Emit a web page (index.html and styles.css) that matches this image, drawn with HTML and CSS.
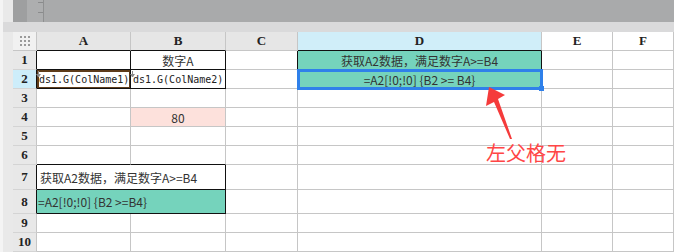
FILE: index.html
```html
<!DOCTYPE html>
<html lang="zh">

<head>
  <meta charset="UTF-8" />
  <meta name="viewport" content="width=device-width, initial-scale=1.0" />
  <title>报表设计</title>
  <link rel="stylesheet" href="styles.css">
</head>

<body>
  <div class="app">
    <div class="edge"></div>
    <div class="main">
      <div class="toolbar">
        <div class="tb-grip"></div>
        <div class="tb-ruler"><i></i><i></i></div>
      </div>
      <div class="band"></div>

      <div class="sheet">
        <!-- header -->
        <div class="corner"><span class="dots"><i></i><i></i><i></i><i></i><i></i><i></i><i></i><i></i><i></i></span></div>
        <div class="ch bk-b">A</div>
        <div class="ch bk-b">B</div>
        <div class="ch">C</div>
        <div class="ch sel bk-b">D</div>
        <div class="ch plain">E</div>
        <div class="ch plain">F</div>

        <!-- 1 -->
        <div class="rh bk-r">1</div>
        <div class="c bk-r bk-b"></div>
        <div class="c bk-r bk-b center">数字A</div>
        <div class="c bk-r"></div>
        <div class="c green bk-r bk-b center">获取A2数据，满足数字A&gt;=B4</div>
        <div class="c"></div>
        <div class="c"></div>

        <!-- 2 -->
        <div class="rh sel bk-r">2</div>
        <div class="c bk-r bk-b src mono"><span class="mark"></span>ds1.G(ColName1)</div>
        <div class="c bk-r bk-b mono"><span class="mark"></span>ds1.G(ColName2)</div>
        <div class="c bk-r"></div>
        <div class="c green center active">=A2[!0;!0] {B2 &gt;= B4}</div>
        <div class="c"></div>
        <div class="c"></div>

        <!-- 3 -->
        <div class="rh">3</div>
        <div class="c"></div>
        <div class="c"></div>
        <div class="c"></div>
        <div class="c"></div>
        <div class="c"></div>
        <div class="c"></div>

        <!-- 4 -->
        <div class="rh">4</div>
        <div class="c"></div>
        <div class="c pink center">80</div>
        <div class="c"></div>
        <div class="c"></div>
        <div class="c"></div>
        <div class="c"></div>

        <!-- 5 -->
        <div class="rh">5</div>
        <div class="c"></div>
        <div class="c"></div>
        <div class="c"></div>
        <div class="c"></div>
        <div class="c"></div>
        <div class="c"></div>

        <!-- 6 -->
        <div class="rh">6</div>
        <div class="c bk-b"></div>
        <div class="c bk-b"></div>
        <div class="c"></div>
        <div class="c"></div>
        <div class="c"></div>
        <div class="c"></div>

        <!-- 7 -->
        <div class="rh bk-r">7</div>
        <div class="c span2 bk-r bk-b">获取A2数据，满足数字A&gt;=B4</div>
        <div class="c"></div>
        <div class="c"></div>
        <div class="c"></div>
        <div class="c"></div>

        <!-- 8 -->
        <div class="rh bk-r">8</div>
        <div class="c span2 green bk-r bk-b tight">=A2[!0;!0] {B2 &gt;=B4}</div>
        <div class="c"></div>
        <div class="c"></div>
        <div class="c"></div>
        <div class="c"></div>

        <!-- 9 -->
        <div class="rh">9</div>
        <div class="c"></div>
        <div class="c"></div>
        <div class="c"></div>
        <div class="c"></div>
        <div class="c"></div>
        <div class="c"></div>

        <!-- 10 -->
        <div class="rh">10</div>
        <div class="c"></div>
        <div class="c"></div>
        <div class="c"></div>
        <div class="c"></div>
        <div class="c"></div>
        <div class="c"></div>
      </div>
    </div>

    <svg class="arrow" width="674" height="252" viewBox="0 0 674 252">
      <polygon points="489,87 505,95 498,99 512,139 510,139 494,102 486,106" fill="#f53b3b" />
    </svg>
    <div class="note">左父格无</div>
  </div>
</body>

</html>
```

FILE: styles.css
```css
body {
  margin: 0;
  font-family: "Noto Sans CJK SC", "Noto Sans", sans-serif;
  font-size: 12px;
  color: #333;
  background: #fff;
}
.app {
  position: relative;
  display: flex;
  width: 674px;
  height: 252px;
  overflow: hidden;
}
.edge {
  width: 3px;
  background: #f4f4f4;
}
.main {
  flex: 1;
  background: #e9e9e9;
  display: flex;
  flex-direction: column;
}
.toolbar {
  height: 22px;
  margin-left: 10px;
  background: #a9aaab;
  display: flex;
}
.tb-grip {
  width: 14px;
  background: #9e9fa0;
}
.tb-ruler {
  width: 16px;
  background: #adaeaf;
  border-right: 1px solid #8f9091;
  display: flex;
  flex-direction: column;
  align-items: flex-end;
  gap: 9px;
  padding-top: 2px;
}
.tb-ruler i {
  display: block;
  width: 5px;
  height: 1px;
  background: #8a8b8c;
}
.band {
  height: 10px;
  background: #dadadb;
}
.sheet {
  margin-left: 10px;
  flex: 1;
  background: #fff;
  display: grid;
  grid-template-columns: 24px 94px 95px 72px 244px 71px 1fr;
  grid-template-rows: repeat(7, 19px) 25px 24px 19px 19px;
}
.sheet > div {
  box-sizing: border-box;
  border-right: 1px solid #c6c6c6;
  border-bottom: 1px solid #c6c6c6;
  min-width: 0;
  white-space: nowrap;
  overflow: visible;
}
.corner {
  background: #f1f1f1;
  display: flex;
  align-items: center;
  justify-content: center;
}
.dots {
  display: grid;
  grid-template-columns: repeat(3, 2px);
  gap: 2px;
}
.dots i {
  width: 2px;
  height: 2px;
  background: #9a9a9a;
}
.ch, .rh {
  font-family: "Liberation Serif", "DejaVu Serif", serif;
  font-weight: bold;
  font-size: 13px;
  color: #222;
  display: flex;
  align-items: center;
  justify-content: center;
}
.ch {
  background: #e6e6e6;
}
.ch.sel {
  background: #d0eef9;
}
.ch.plain {
  background: #fff;
}
.rh {
  background: #e8e8e8;
  border-bottom-color: #d4d4d4 !important;
}
.rh.sel {
  background: #cdedfa;
}
.c {
  display: flex;
  align-items: center;
  padding-left: 3px;
}
.center {
  justify-content: center;
  padding-left: 0;
}
.tight {
  padding-left: 1px;
}
.span2 {
  grid-column: span 2;
}
.sheet > .bk-r {
  border-right-color: #111;
}
.sheet > .bk-b {
  border-bottom-color: #111;
}
.sheet > .rh.bk-r {
  border-right-color: #111;
}
.green {
  background: #75d3bc;
}
.pink {
  background: #fde1dc;
}
.mono {
  font-family: "DejaVu Sans Mono", "Liberation Mono", monospace;
  font-size: 10px;
  color: #222;
  padding-left: 2px;
  position: relative;
}
.src {
  box-shadow: inset 2px 2px 0 #5e3c1b, inset -1px -1px 0 #5e3c1b;
}
.mark {
  position: absolute;
  left: 1px;
  top: 1px;
  width: 1px;
  height: 5px;
  background: #8a8a8a;
}
.mark::after {
  content: "";
  position: absolute;
  left: -2px;
  top: 3px;
  border-left: 2px solid transparent;
  border-right: 2px solid transparent;
  border-top: 3px solid #8a8a8a;
  width: 1px;
}
.active {
  position: relative;
}
.active::after {
  content: "";
  position: absolute;
  left: -1px;
  top: -1px;
  right: -2px;
  bottom: -2px;
  border: 3px solid #2f80ea;
}
.active::before {
  content: "";
  position: absolute;
  right: -3px;
  bottom: -3px;
  width: 5px;
  height: 5px;
  background: #2f80ea;
  z-index: 1;
}
.arrow {
  position: absolute;
  left: 0;
  top: 0;
  pointer-events: none;
}
.note {
  position: absolute;
  left: 486px;
  top: 141px;
  font-size: 20px;
  line-height: 24px;
  color: #ff4646;
}
```
